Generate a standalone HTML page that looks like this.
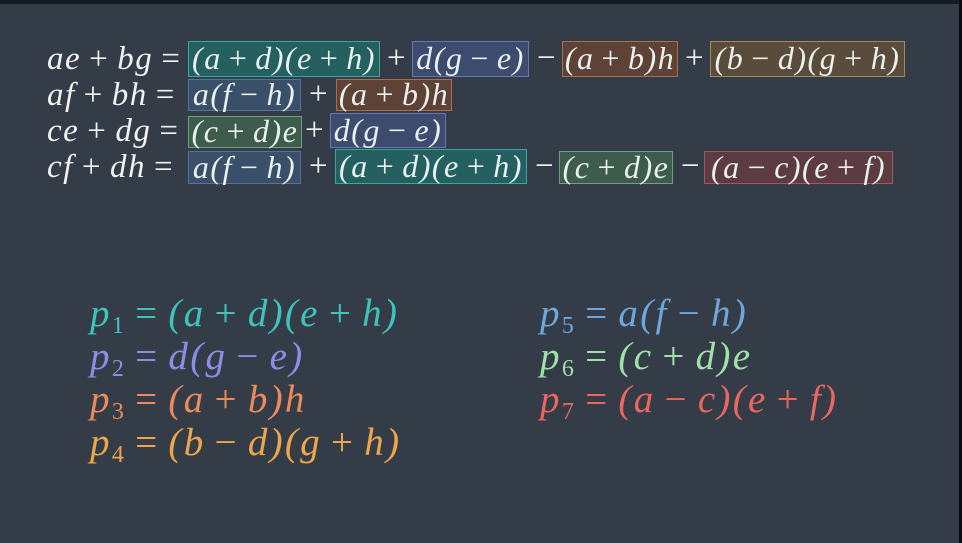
<!DOCTYPE html>
<html><head><meta charset="utf-8"><style>
html,body{margin:0;padding:0}
body{width:962px;height:543px;background:#343d47;position:relative;overflow:hidden;font-family:"Liberation Serif",serif;font-style:italic;color:#f2f2f2}
.top{position:absolute;left:0;top:0;width:962px;height:4px;background:#141b22}
.rt{position:absolute;right:0;top:0;width:3px;height:543px;background:#0a0d10}
.t{position:absolute;font-size:33px;white-space:nowrap;line-height:1;letter-spacing:1.5px}
.t .n{margin:0 8px}
.b{position:absolute;box-sizing:border-box;border:1.5px solid;font-size:32px;white-space:nowrap;line-height:1;display:flex;align-items:center;justify-content:center;overflow:visible;color:#e8f0f0;letter-spacing:1.5px;padding-bottom:2px}
.n{font-style:normal;margin:0 7px}
.teal{background:#24605f;border-color:#37a8a2}
.blue{background:#3d4b6e;border-color:#6676b0}
.sblue{background:#3a5068;border-color:#54739a}
.brown{background:#5e4236;border-color:#a8704f}
.olive{background:#5a4c3a;border-color:#a08a5e}
.green{background:#3e5c4c;border-color:#6fa080}
.red{background:#5c3c40;border-color:#a05a5c}
.o{position:absolute;font-size:33px;font-style:normal;line-height:1}
.p{position:absolute;font-size:39px;white-space:nowrap;line-height:1;letter-spacing:2.3px}
.p .n{margin:0 9px}
sub{font-size:24px;font-style:normal;vertical-align:-7px}
</style></head><body>
<div class="top"></div><div class="rt"></div>

<div class="t" style="left:47px;top:43px">ae<span class="n">+</span>bg<span class="n">=</span></div>
<div class="b teal" style="left:188px;top:41px;width:192px;height:36px">(a<span class="n">+</span>d)(e<span class="n">+</span>h)</div>
<div class="o" style="left:387px;top:42px">+</div>
<div class="b blue" style="left:412px;top:41px;width:117px;height:36px">d(g<span class="n">−</span>e)</div>
<div class="o" style="left:537px;top:42px">−</div>
<div class="b brown" style="left:562px;top:41px;width:116px;height:36px">(a<span class="n">+</span>b)h</div>
<div class="o" style="left:685px;top:42px">+</div>
<div class="b olive" style="left:710px;top:41px;width:195px;height:36px">(b<span class="n">−</span>d)(g<span class="n">+</span>h)</div>

<div class="t" style="left:47px;top:79px">af<span class="n">+</span>bh<span class="n">=</span></div>
<div class="b sblue" style="left:188px;top:79px;width:113px;height:32px">a(f<span class="n">−</span>h)</div>
<div class="o" style="left:309px;top:78px">+</div>
<div class="b brown" style="left:336px;top:79px;width:116px;height:32px">(a<span class="n">+</span>b)h</div>

<div class="t" style="left:47px;top:115px">ce<span class="n">+</span>dg<span class="n">=</span></div>
<div class="b green" style="left:188px;top:116px;width:114px;height:32px">(c<span class="n">+</span>d)e</div>
<div class="o" style="left:305px;top:114px">+</div>
<div class="b blue" style="left:330px;top:113px;width:116px;height:35px">d(g<span class="n">−</span>e)</div>

<div class="t" style="left:47px;top:151px">cf<span class="n">+</span>dh<span class="n">=</span></div>
<div class="b sblue" style="left:188px;top:151px;width:113px;height:33px">a(f<span class="n">−</span>h)</div>
<div class="o" style="left:309px;top:150px">+</div>
<div class="b teal" style="left:335px;top:149px;width:192px;height:35px">(a<span class="n">+</span>d)(e<span class="n">+</span>h)</div>
<div class="o" style="left:535px;top:150px">−</div>
<div class="b green" style="left:559px;top:151px;width:114px;height:33px">(c<span class="n">+</span>d)e</div>
<div class="o" style="left:681px;top:150px">−</div>
<div class="b red" style="left:704px;top:151px;width:189px;height:33px">(a<span class="n">−</span>c)(e<span class="n">+</span>f)</div>

<div class="p" style="left:90px;top:294px;color:#3cc4bd">p<sub>1</sub><span class="n">=</span>(a<span class="n">+</span>d)(e<span class="n">+</span>h)</div>
<div class="p" style="left:90px;top:337px;color:#8a8fe6">p<sub>2</sub><span class="n">=</span>d(g<span class="n">−</span>e)</div>
<div class="p" style="left:90px;top:380px;color:#ec8a5c">p<sub>3</sub><span class="n">=</span>(a<span class="n">+</span>b)h</div>
<div class="p" style="left:90px;top:423px;color:#eda74a">p<sub>4</sub><span class="n">=</span>(b<span class="n">−</span>d)(g<span class="n">+</span>h)</div>
<div class="p" style="left:540px;top:294px;color:#6fa6dc">p<sub>5</sub><span class="n">=</span>a(f<span class="n">−</span>h)</div>
<div class="p" style="left:540px;top:337px;color:#9fe2a8">p<sub>6</sub><span class="n">=</span>(c<span class="n">+</span>d)e</div>
<div class="p" style="left:540px;top:380px;color:#ec6660">p<sub>7</sub><span class="n">=</span>(a<span class="n">−</span>c)(e<span class="n">+</span>f)</div>
</body></html>
